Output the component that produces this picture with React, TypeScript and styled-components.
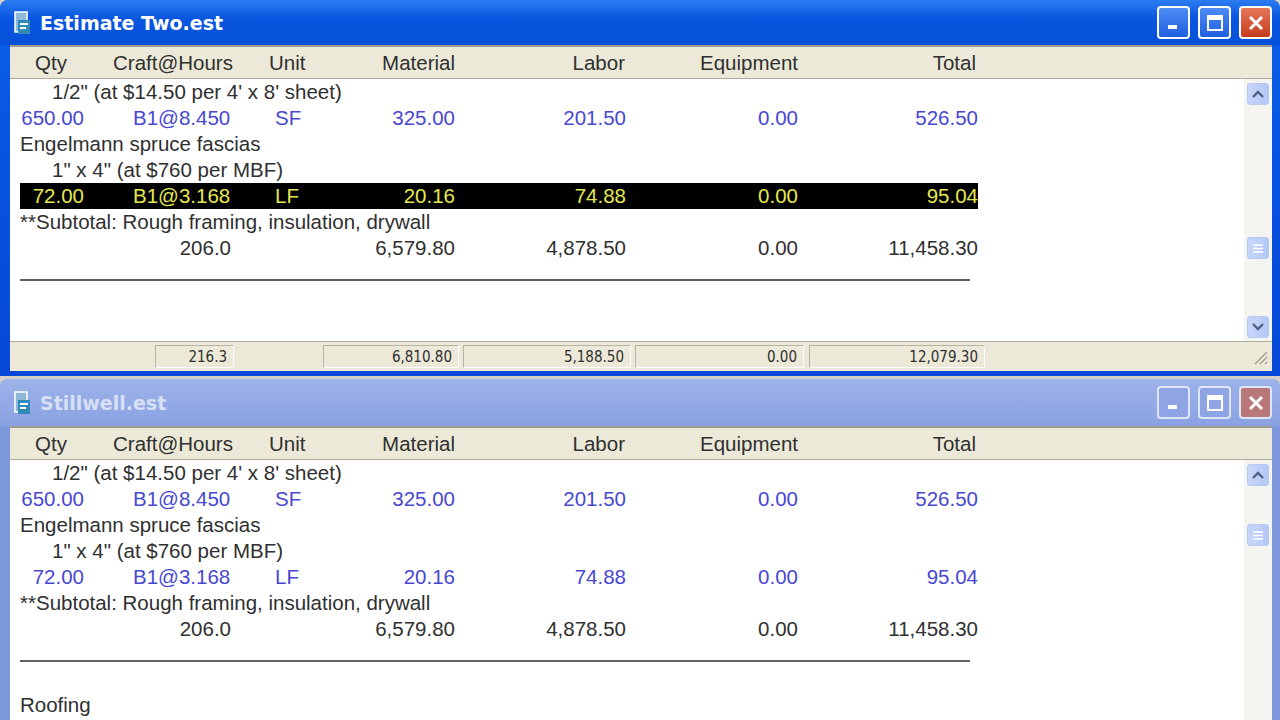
import React from "react";
import styled, { createGlobalStyle } from "styled-components";

const Global = createGlobalStyle`
  html,body{margin:0;padding:0;width:1280px;height:720px;overflow:hidden;background:#fff;}
  *{box-sizing:border-box;}
`;

const Page = styled.div`
  width:1280px;height:720px;display:flex;flex-direction:column;gap:3px;overflow:hidden;
  font-family:"Liberation Sans",Arial,sans-serif;background:#d4d0c8;
`;
const Win = styled.div<{ $active: boolean; $h: number }>`
  height:${p => p.$h}px;flex:none;display:flex;flex-direction:column;
  background:${p => (p.$active ? "linear-gradient(#0a5ee8,#0547d6)" : "#7e98dc")};
  border-radius:8px 8px 0 0;padding:0 8px 5px 10px;overflow:hidden;
`;
const TitleBar = styled.div<{ $active: boolean; $h: number }>`
  height:${p => p.$h}px;flex:none;display:flex;align-items:center;gap:6px;
  color:${p => (p.$active ? "#fff" : "#d8e0f4")};font-family:"DejaVu Sans",sans-serif;font-size:19px;font-weight:bold;
  background:${p => (p.$active ? "linear-gradient(#2b7cf2,#0a56e0 40%,#0550d8)" : "linear-gradient(#9cb2ea,#8aa2e2)")};
  margin:0 -8px 0 -10px;padding:0 8px 0 12px;border-radius:8px 8px 0 0;
`;
const Title = styled.div`flex:1;`;
const Btn = styled.div<{ $close?: boolean; $active: boolean }>`
  width:33px;height:33px;border:2px solid ${p => (p.$active ? "#fff" : "#e0e6f6")};border-radius:4px;
  background:${p => (p.$close ? (p.$active ? "linear-gradient(#e6775a,#c63a1c)" : "#b8787a") : p.$active ? "linear-gradient(#4d8cf5,#1f5fe0)" : "#8ea4e4")};
  display:flex;align-items:center;justify-content:center;margin-left:2px;
`;
const Client = styled.div`
  flex:1;display:flex;flex-direction:column;background:#fff;border-top:2px solid #a09c90;min-height:0;
`;
const Header = styled.div`
  height:32px;flex:none;background:#ece9d8;border-bottom:1px solid #b0ac9c;display:flex;
`;
const Body = styled.div`flex:1;display:flex;min-height:0;`;
const Rows = styled.div`flex:1;overflow:hidden;`;
const Grid = styled.div<{ $hl?: boolean; $blue?: boolean }>`
  height:26px;display:grid;align-items:center;font-size:20.5px;
  grid-template-columns:10px 64px 49px 142px 53px 127px 171px 172px 180px;
  color:${p => (p.$hl ? "#e4e850" : p.$blue ? "#4848d0" : "#303030")};
  & > .bg{grid-column:2 / 10;grid-row:1;height:26px;background:${p => (p.$hl ? "#000" : "transparent")};}
`;
const Cell = styled.div<{ $c: number; $al?: string; $pr?: number; $pl?: number }>`
  grid-column:${p => p.$c};grid-row:1;text-align:${p => p.$al || "right"};
  padding-right:${p => p.$pr || 0}px;margin-left:${p => p.$pl || 0}px;white-space:nowrap;
`;
const HeadGrid = styled(Grid)`height:32px;color:#303030;flex:1;`;
const Text = styled.div<{ $ind: number; $mt?: number }>`
  height:26px;line-height:26px;font-size:20.5px;color:#303030;padding-left:${p => p.$ind}px;white-space:nowrap;
  margin-top:${p => p.$mt || 0}px;
`;
const Rule = styled.div`height:2px;background:#606060;margin:18px 0 0 10px;width:950px;`;
const Scroll = styled.div`
  width:28px;flex:none;background:#f4f4f0;display:flex;flex-direction:column;align-items:center;padding:0 2px;
`;
const SBtn = styled.div<{ $mt?: number; $mb?: number }>`
  width:22px;height:22px;border-radius:3px;background:linear-gradient(90deg,#c8d6fa,#b4c8f8);border:1px solid #b8c8ee;
  display:flex;align-items:center;justify-content:center;margin-top:${p => p.$mt || 0}px;margin-bottom:${p => p.$mb || 0}px;
`;
const Spacer = styled.div`flex:1;`;
const HeadPad = styled.div`width:28px;`;
const Footer = styled.div`
  height:30px;flex:none;background:#ece9d8;border-top:1px solid #b0ac9c;position:relative;
  font-family:"DejaVu Sans Condensed","DejaVu Sans",sans-serif;font-size:15px;color:#303030;
`;
const FBox = styled.div<{ $l: number; $w: number }>`
  position:absolute;left:${p => p.$l}px;width:${p => p.$w}px;top:3px;height:23px;text-align:right;padding-right:6px;line-height:23px;
  border:1px solid;border-color:#b8b4a4 #fff #fff #b8b4a4;
`;
const Grip = styled.div`position:absolute;right:4px;bottom:2px;`;

const Up = () => (<svg width="12" height="8" viewBox="0 0 12 8"><path d="M1 7L6 2l5 5" stroke="#4d6185" strokeWidth="2.4" fill="none" /></svg>);
const Down = () => (<svg width="12" height="8" viewBox="0 0 12 8"><path d="M1 1l5 5 5-5" stroke="#4d6185" strokeWidth="2.4" fill="none" /></svg>);
const Thumb = () => (<svg width="10" height="9"><path d="M0 1h10M0 4.5h10M0 8h10" stroke="#fff" strokeWidth="1.4" /></svg>);

const Icon = () => (
  <svg width="22" height="26" viewBox="0 0 22 26">
    <rect x="3" y="2" width="12" height="20" fill="#8fb8d8" stroke="#fff" strokeWidth="1.5" />
    <rect x="6" y="10" width="12" height="14" fill="#2f8ab8" />
    <path d="M8 14h8M8 18h6" stroke="#fff" strokeWidth="2" />
  </svg>
);

type R = { t: "txt"; s: string; i: number } | { t: "num"; v: string[]; blue?: boolean };

const rows: R[] = [
  { t: "txt", s: '1/2" (at $14.50 per 4\' x 8\' sheet)', i: 42 },
  { t: "num", v: ["650.00", "B1@8.450", "SF", "325.00", "201.50", "0.00", "526.50"], blue: true },
  { t: "txt", s: "Engelmann spruce fascias", i: 10 },
  { t: "txt", s: '1" x 4"  (at $760 per MBF)', i: 42 },
];

function NumRow({ v, hl, blue }: { v: string[]; hl?: boolean; blue?: boolean }) {
  return (
    <Grid $hl={hl} $blue={blue}>
      <div className="bg" />
      <Cell $c={2}>{v[0]}</Cell>
      <Cell $c={4} $al="left">{v[1]}</Cell>
      <Cell $c={5} $al="left">{v[2]}</Cell>
      <Cell $c={6}>{v[3]}</Cell>
      <Cell $c={7}>{v[4]}</Cell>
      <Cell $c={8}>{v[5]}</Cell>
      <Cell $c={9}>{v[6]}</Cell>
    </Grid>
  );
}

function Window({ active, title, h, tb }: { active: boolean; title: string; h: number; tb: number }) {
  return (
    <Win $active={active} $h={h}>
      <TitleBar $active={active} $h={tb}>
        <Icon />
        <Title>{title}</Title>
        <Btn $active={active}><svg width="14" height="14"><rect x="1" y="9" width="9" height="4" fill="#fff" /></svg></Btn>
        <Btn $active={active}><svg width="18" height="18"><rect x="2" y="2" width="14" height="14" fill="none" stroke="#fff" strokeWidth="2" /><rect x="2" y="2" width="14" height="4" fill="#fff" /></svg></Btn>
        <Btn $active={active} $close><svg width="18" height="18"><path d="M3 3l12 12M15 3L3 15" stroke="#fff" strokeWidth="3" /></svg></Btn>
      </TitleBar>
      <Client>
        <Header>
          <HeadGrid>
            <Cell $c={2} $al="left" $pl={15}>Qty</Cell>
            <Cell $c={4} $al="left" $pl={-20}>Craft@Hours</Cell>
            <Cell $c={5} $al="left" $pl={-6}>Unit</Cell>
            <Cell $c={6}>Material</Cell>
            <Cell $c={7} $pr={1}>Labor</Cell>
            <Cell $c={8}>Equipment</Cell>
            <Cell $c={9} $pr={2}>Total</Cell>
          </HeadGrid>
          <HeadPad />
        </Header>
        <Body>
          <Rows>
            {rows.map((r, i) => r.t === "txt" ? <Text key={i} $ind={r.i}>{r.s}</Text> : <NumRow key={i} v={r.v} blue={r.blue} />)}
            <NumRow v={["72.00", "B1@3.168", "LF", "20.16", "74.88", "0.00", "95.04"]} hl={active} blue={!active} />
            <Text $ind={10}>**Subtotal: Rough framing, insulation, drywall</Text>
            <Grid>
              <Cell $c={4} $pr={44}>206.0</Cell>
              <Cell $c={6}>6,579.80</Cell>
              <Cell $c={7}>4,878.50</Cell>
              <Cell $c={8}>0.00</Cell>
              <Cell $c={9}>11,458.30</Cell>
            </Grid>
            <Rule />
            {!active && <Text $ind={10} $mt={30}>Roofing</Text>}
          </Rows>
          <Scroll>
            <SBtn $mt={4}><Up /></SBtn>
            <SBtn $mt={active ? 132 : 38}><Thumb /></SBtn>
            <Spacer />
            <SBtn $mb={3}><Down /></SBtn>
          </Scroll>
        </Body>
        {active && (
          <Footer>
            <FBox $l={145} $w={79}>216.3</FBox>
            <FBox $l={313} $w={136}>6,810.80</FBox>
            <FBox $l={453} $w={168}>5,188.50</FBox>
            <FBox $l={625} $w={169}>0.00</FBox>
            <FBox $l={799} $w={176}>12,079.30</FBox>
            <Grip><svg width="16" height="16"><path d="M15 3L3 15M15 8L8 15M15 13L13 15" stroke="#a8a498" strokeWidth="1.5" /></svg></Grip>
          </Footer>
        )}
      </Client>
    </Win>
  );
}

export default function App() {
  return (
    <>
      <Global />
      <Page>
        <Window active title="Estimate Two.est" h={376} tb={45} />
        <Window active={false} title="Stillwell.est" h={400} tb={47} />
      </Page>
    </>
  );
}
